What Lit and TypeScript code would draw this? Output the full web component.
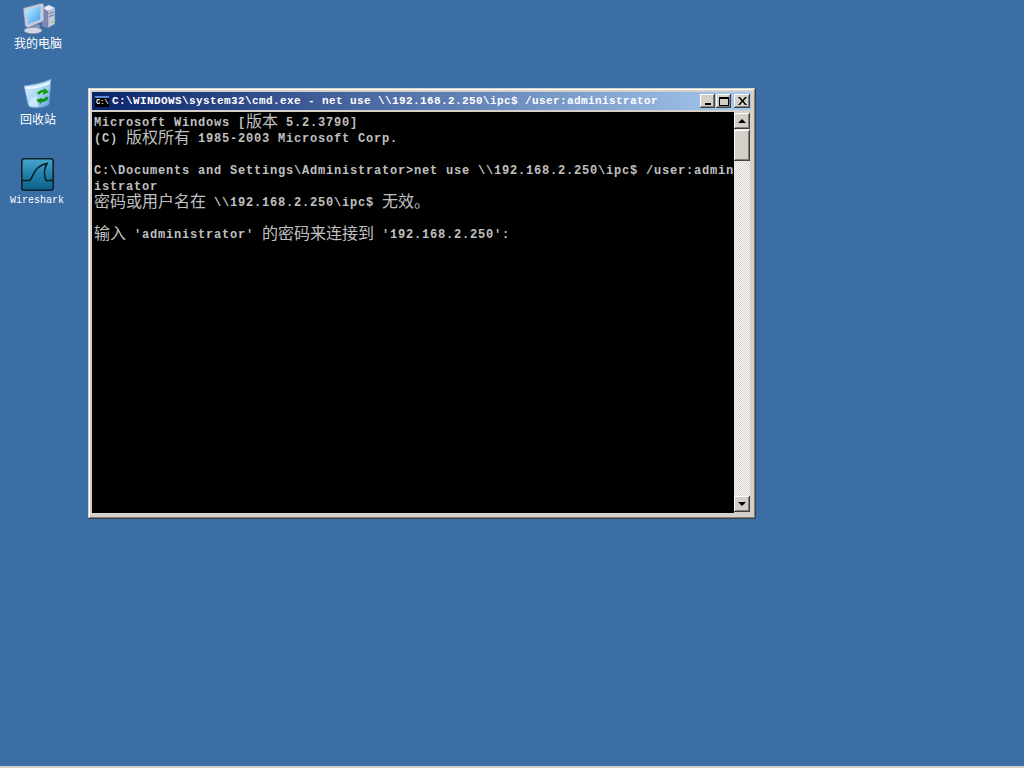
import { LitElement, html, css, svg } from "lit";
import { customElement } from "lit/decorators.js";

const computerIcon = svg`<svg width="34" height="34" viewBox="0 0 34 34">
  <defs><linearGradient id="scr" x1="0" y1="0" x2="1" y2="1"><stop offset="0" stop-color="#c8f0ff"/><stop offset="1" stop-color="#3aa0f0"/></linearGradient></defs>
  <path d="M20 6l6 3v17l-6-2z" fill="#7f88ae"/>
  <path d="M26 9l7-3v16l-7 4z" fill="#c5cade" stroke="#6a7298" stroke-width=".5"/>
  <path d="M20 6l7-3 6 3-7 3z" fill="#e8ebf5"/>
  <path d="M27 11l5-2v1.500l-5 2zM27 14l5-2v1.500l-5 2z" fill="#7f88ae"/>
  <circle cx="30.500" cy="20" r="1" fill="#6fe04a"/>
  <path d="M1 6l19-5 2 2v16L6 26l-3-2z" fill="#c4cbe0" stroke="#6a7298" stroke-width=".7"/>
  <path d="M3.500 8l15-4-.4 13.500L6 22z" fill="url(#scr)"/>
  <path d="M9 25l8-3 1 4-9 3z" fill="#8d94b4"/>
  <ellipse cx="11" cy="28.500" rx="9" ry="3.200" fill="#d2d6e4" stroke="#7a809c" stroke-width=".7"/>
</svg>`;

const binIcon = svg`<svg width="30" height="32" viewBox="0 0 30 32">
  <defs><linearGradient id="bin" x1="0" y1="0" x2="1" y2="1"><stop offset="0" stop-color="#e6f4ff"/><stop offset=".55" stop-color="#a8d4f4"/><stop offset="1" stop-color="#5c9fdc"/></linearGradient></defs>
  <path d="M1 8C8 7 20 5 28 1l-2 25c-2 3-14 5-19 3-1-1-2-2-2-3z" fill="url(#bin)" stroke="#6fa0cc" stroke-width=".6"/>
  <path d="M3 9c8 0 17-2 24-6l-.5 3C19 9 10 11 3.500 11z" fill="#f0f8ff"/>
  <path d="M6 27c0-5 4-8 8-9-1 3 0 7 2 10-3 1-8 1-10-1z" fill="#d4ecff" opacity=".8"/>
  <path d="M15 16a6 6 0 0 1 8-2" fill="none" stroke="#17a017" stroke-width="3"/>
  <path d="M21 10l5 4-6 3z" fill="#17a017"/>
  <path d="M24.500 19a6 6 0 0 1-8 3" fill="none" stroke="#0f8f0f" stroke-width="3"/>
  <path d="M18 26l-5-4 6-2z" fill="#0f8f0f"/>
</svg>`;

const sharkIcon = svg`<svg width="33" height="33" viewBox="0 0 33 33">
  <defs><linearGradient id="sh" x1="0" y1="0" x2="0" y2="1"><stop offset="0" stop-color="#4aa6cc"/><stop offset=".5" stop-color="#1f80aa"/><stop offset="1" stop-color="#0e5f88"/></linearGradient></defs>
  <rect x=".8" y=".8" width="31.400" height="31.400" rx="2.500" fill="url(#sh)" stroke="#10222e" stroke-width="1.600"/>
  <path d="M1 22.500h7c4 0 3-14 18-17-3 5-3 12-1 17h7" fill="none" stroke="#0a1820" stroke-width="1.500"/>
</svg>`;

const line = (parts: (string | [string])[]) =>
  html`<div class="line">${parts.map((p) =>
    typeof p === "string" ? p : html`<span class="cjk">${p[0]}</span>`
  )}</div>`;

@customElement("app-root")
export class AppRoot extends LitElement {
  static styles = css`
    :host {
      display: block;
      position: relative;
      width: 1024px;
      height: 768px;
      overflow: hidden;
      background: #3a6ea5;
    }
    .desktop {
      display: flex;
      flex-direction: column;
      width: 76px;
      padding-top: 2px;
    }
    .tile {
      display: flex;
      flex-direction: column;
      align-items: center;
      height: 76px;
      color: #fff;
      font: 12px/14px "Noto Sans CJK SC", sans-serif;
    }
    .glyph {
      height: 34px;
      display: flex;
      align-items: flex-start;
      justify-content: center;
    }
    .computer .glyph svg {
      margin-left: 2px;
    }
    .bin {
      height: 80px;
    }
    .shark .glyph {
      margin-right: 1px;
    }
    .shark .label {
      margin: 2px 2px 0 0;
      font: 400 10px/14px "Liberation Mono", monospace;
    }
    .window {
      position: absolute;
      left: 88px;
      top: 88px;
      width: 668px;
      height: 431px;
      box-sizing: border-box;
      padding: 4px 5px 6px 4px;
      display: flex;
      flex-direction: column;
      background: #d4d0c8;
      box-shadow: inset -1px -1px 0 #404040, inset 1px 1px 0 #d4d0c8,
        inset -2px -2px 0 #808080, inset 2px 2px 0 #fff;
    }
    .title {
      height: 18px;
      flex: none;
      display: flex;
      align-items: center;
      padding: 0 1px 0 3px;
      background: linear-gradient(90deg, #0a246a, #a6caf0);
      color: #fff;
      font: bold 11px/18px "Liberation Mono", monospace;
      letter-spacing: 0.4px;
      white-space: pre;
    }
    .appicon {
      width: 14px;
      height: 11px;
      flex: none;
      box-sizing: border-box;
      background: #000;
      border-top: 2px solid #5a8ad8;
      color: #fff;
      padding-left: 1px;
      font: bold 7px/9px "Liberation Mono", monospace;
      letter-spacing: 0;
      overflow: hidden;
    }
    .title-text {
      flex: 1;
      min-width: 0;
      margin-left: 3px;
    }
    .btns {
      display: flex;
      flex: none;
    }
    .btn {
      width: 15px;
      height: 14px;
      flex: none;
      box-sizing: border-box;
      display: flex;
      align-items: center;
      justify-content: center;
      background: #d4d0c8;
      box-shadow: inset -1px -1px 0 #404040, inset 1px 1px 0 #fff,
        inset -2px -2px 0 #808080;
    }
    .btn + .btn {
      margin-left: 1px;
    }
    .btn.close {
      margin-left: 3px;
      width: 16px;
    }
    .body {
      flex: 1;
      display: flex;
      min-height: 0;
      margin-top: 2px;
    }
    .console {
      flex: 1;
      min-width: 0;
      background: #000;
      color: #c0c0c0;
      padding: 3px 2px 0;
      overflow: hidden;
      font: bold 12px/16px "Liberation Mono", monospace;
      letter-spacing: 0.8px;
    }
    .line {
      height: 16px;
      white-space: pre;
    }
    .cjk {
      font: 400 16px/1 "Noto Sans CJK SC", sans-serif;
      line-height: 0;
      letter-spacing: 0;
      vertical-align: -1px;
    }
    .scroll {
      width: 16px;
      flex: none;
      display: flex;
      flex-direction: column;
      background-color: #fff;
      background-image: conic-gradient(
        #d4d0c8 25%,
        #fff 0 50%,
        #d4d0c8 0 75%,
        #fff 0
      );
      background-size: 2px 2px;
      margin: 1px 1px 1px 0;
    }
    .sbtn {
      height: 16px;
      flex: none;
      box-sizing: border-box;
      display: flex;
      align-items: center;
      justify-content: center;
      background: #d4d0c8;
      box-shadow: inset -1px -1px 0 #404040, inset 1px 1px 0 #fff,
        inset -2px -2px 0 #808080;
    }
    .thumb {
      height: 31px;
      margin-top: 1px;
    }
    .spacer {
      flex: 1;
    }
    .taskbar {
      position: absolute;
      left: 0;
      right: 0;
      bottom: 0;
      height: 2px;
      background: #d4d0c8;
    }
  `;

  render() {
    return html`
      <div class="desktop">
        <div class="tile computer"><div class="glyph">${computerIcon}</div><div class="label">我的电脑</div></div>
        <div class="tile bin"><div class="glyph">${binIcon}</div><div class="label">回收站</div></div>
        <div class="tile shark"><div class="glyph">${sharkIcon}</div><div class="label">Wireshark</div></div>
      </div>
      <div class="window">
        <div class="title">
          <div class="appicon">C:\\</div>
          <div class="title-text">C:\\WINDOWS\\system32\\cmd.exe - net use \\\\192.168.2.250\\ipc$ /user:administrator</div>
          <div class="btns">
            <div class="btn"><svg width="8" height="8" viewBox="0 0 8 8"><path d="M1 6h6v2H1z" fill="#000"/></svg></div>
            <div class="btn"><svg width="10" height="9" viewBox="0 0 10 9"><path d="M0 0h10v9H0zM1 2v6h8V2z" fill="#000" fill-rule="evenodd"/></svg></div>
            <div class="btn close"><svg width="9" height="8" viewBox="0 0 9 8"><path d="M0 0h2l2.500 3L7 0h2L5.500 4 9 8H7L4.500 5 2 8H0l3.500-4z" fill="#000"/></svg></div>
          </div>
        </div>
        <div class="body">
          <div class="console">
            ${line(["Microsoft Windows [", ["版本"], " 5.2.3790]"])}
            ${line(["(C) ", ["版权所有"], " 1985-2003 Microsoft Corp."])}
            ${line([""])}
            ${line(["C:\\Documents and Settings\\Administrator>net use \\\\192.168.2.250\\ipc$ /user:admin"])}
            ${line(["istrator"])}
            ${line([["密码或用户名在"], " \\\\192.168.2.250\\ipc$ ", ["无效。"]])}
            ${line([""])}
            ${line([["输入"], " 'administrator' ", ["的密码来连接到"], " '192.168.2.250':"])}
          </div>
          <div class="scroll">
            <div class="sbtn"><svg width="8" height="4" viewBox="0 0 8 4"><path d="M4 0l4 4H0z" fill="#000"/></svg></div>
            <div class="sbtn thumb"></div>
            <div class="spacer"></div>
            <div class="sbtn"><svg width="8" height="4" viewBox="0 0 8 4"><path d="M0 0h8L4 4z" fill="#000"/></svg></div>
          </div>
        </div>
      </div>
      <div class="taskbar"></div>
    `;
  }
}
